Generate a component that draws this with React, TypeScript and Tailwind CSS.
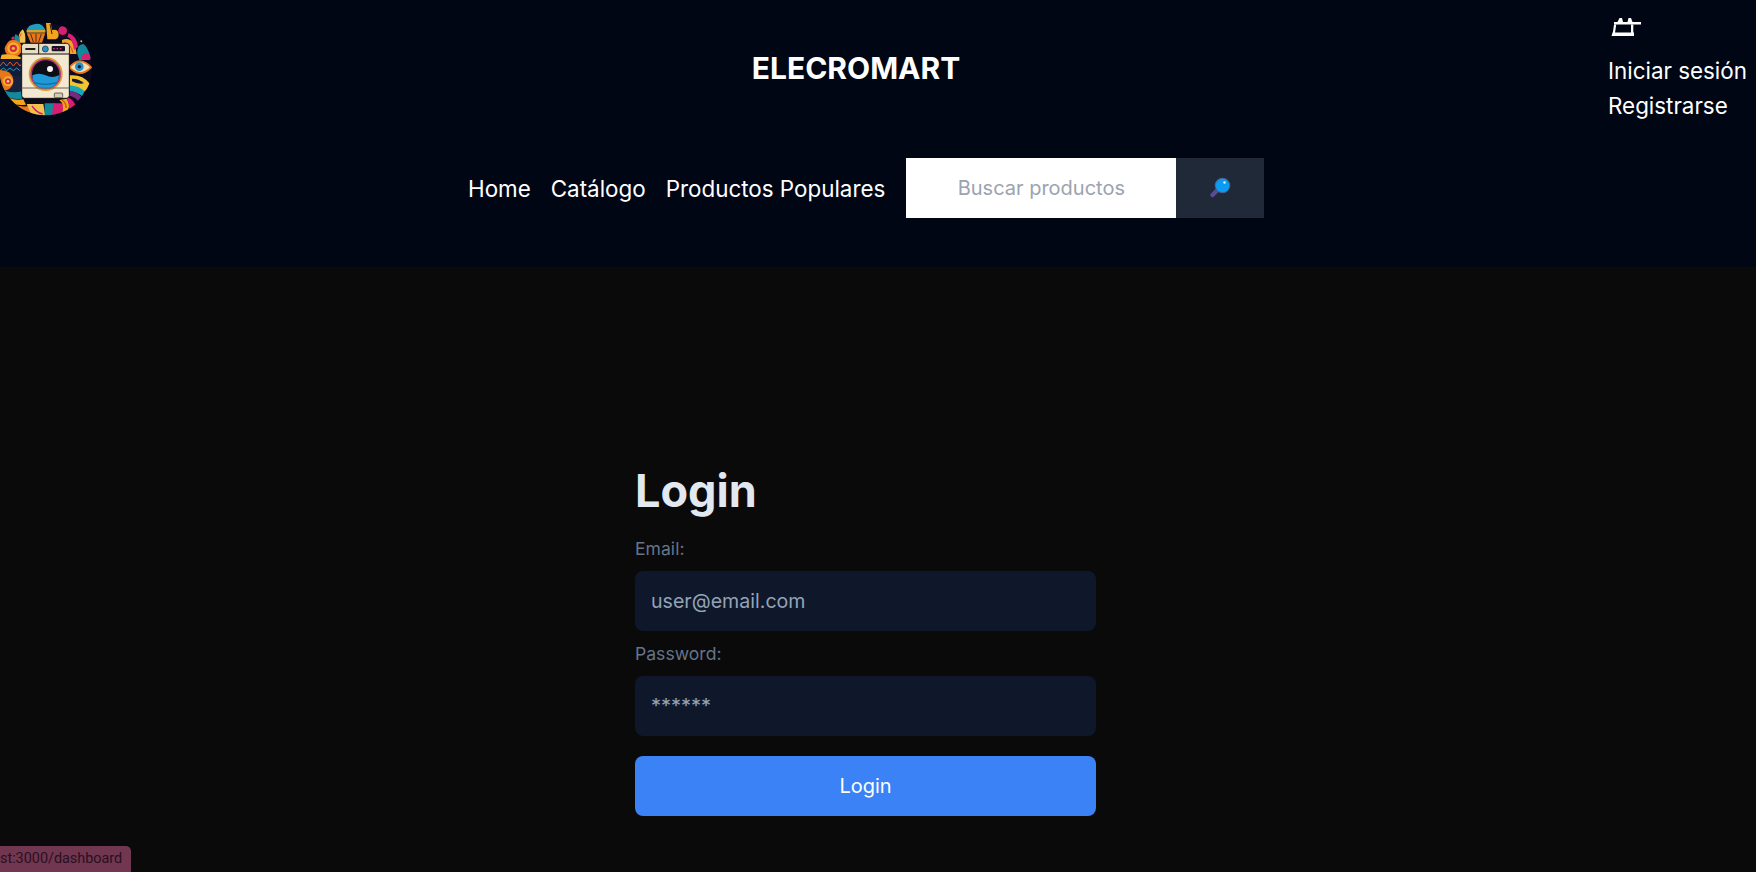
const Logo = () => (
  <svg width="96" height="120" viewBox="0 0 288 360" className="block blur-[0.4px]">
    <defs>
      <clipPath id="c"><circle cx="137" cy="207" r="139" /></clipPath>
    </defs>
    <g clipPath="url(#c)">
      <rect x="0" y="60" width="288" height="300" fill="#0c0a1e" />
      <path d="M80 96 a28 26 0 0 1 56 0z" fill="#1f9fc0" />
      <rect x="80" y="90" width="56" height="8" fill="#d9a02a" />
      <path d="M80 100 h56 l-10 28 h-34z" fill="#e8761b" />
      <path d="M92 102 l8 24 M108 102 v24 M124 102 l-8 24" stroke="#3a1d10" strokeWidth="2.5" />
      <path d="M138 68 h14 l4 22 q20-4 20 14 q0 14-16 14 h-18z" fill="#f2a51c" />
      <path d="M150 72 l6 30" stroke="#2a1a10" strokeWidth="3" />
      <circle cx="188" cy="92" r="13" fill="#d81e72" />
      <path d="M56 128 q-4-26 12-40 q10 10 8 40z" fill="#f2c14e" />
      <path d="M58 128 q-4-14 6-28" stroke="#e8551f" strokeWidth="3" fill="none" />
      <path d="M44 128 q-4-14 2-26 q12 4 14 26z" fill="#14899b" />
      <circle cx="38" cy="114" r="5" fill="#d81e72" />
      <circle cx="40" cy="145" r="26" fill="#e8761b" />
      <circle cx="40" cy="145" r="18" fill="#f4b02a" />
      <circle cx="40" cy="145" r="11" fill="#d6234a" />
      <circle cx="40" cy="145" r="5" fill="#f4b02a" />
      <path d="M0 165 q30-6 62 6 v6 h-62z" fill="#f4b02a" />
      <rect x="0" y="178" width="66" height="52" fill="#101c3c" />
      <path d="M0 198 l10-12 10 12 10-12 10 12 10-12 10 12 10-12" stroke="#e8551f" strokeWidth="3" fill="none" />
      <path d="M0 212 l10-8 10 8 10-8 10 8 10-8 10 8" stroke="#21a0b5" strokeWidth="3" fill="none" />
      <rect x="0" y="228" width="66" height="50" fill="#17213f" />
      <path d="M0 210 q36 0 40 30 q0 32-40 34z" fill="#e8761b" />
      <circle cx="24" cy="244" r="15" fill="#f4b02a" />
      <circle cx="24" cy="244" r="9" fill="#d6234a" />
      <circle cx="24" cy="244" r="4" fill="#f2d58a" />
      <path d="M14 272 q26 8 52 2 v22 q-28 4-44-6z" fill="#14899b" />
      <path d="M20 290 q20 12 50 8 l8 16 q-28 4-48-6z" fill="#f2a51c" />
      <path d="M38 312 q22 10 50 6 l16 26 q-36-4-58-20z" fill="#e8761b" />
      <path d="M80 312 h50 l6 36 q-26 4-44-10z" fill="#f2c14e" />
      <path d="M96 318 q14 20 32 24" stroke="#d81e72" strokeWidth="4" fill="none" />
      <path d="M134 310 h30 l-6 40 h-24z" fill="#12899b" />
      <path d="M160 310 h28 q6 16-6 36 h-26z" fill="#d81e72" />
      <path d="M178 300 q18 14 8 38 l18-8 q8-18-4-34z" fill="#f2a51c" />
      <path d="M186 300 q14 10 12 24" stroke="#c9501b" strokeWidth="4" fill="none" />
      <path d="M186 120 q36-14 44 42 h-22 q-2-26-22-28z" fill="#f0a52a" />
      <path d="M192 128 q22 2 26 30" stroke="#c9501b" strokeWidth="3" fill="none" />
      <path d="M206 100 q24 8 28 40 l-12 10 q-4-34-20-40z" fill="#d9236f" />
      <path d="M232 162 q-2-30 18-30 q18 12 24 38 l-6 10 h-30z" fill="#12899b" />
      <path d="M244 172 q8-18 24-10 l4 16 h-28z" fill="#d81e72" />
      <circle cx="244" cy="124" r="3" fill="#f2c14e" />
      <path d="M205 202 q34-42 72 0 q-38 40-72 0z" fill="#e8761b" />
      <path d="M212 202 q28-30 58 0 q-30 28-58 0z" fill="#efe0b8" />
      <circle cx="238" cy="200" r="13" fill="#2a8fc4" />
      <circle cx="238" cy="200" r="5" fill="#0d1b2e" />
      <path d="M208 226 q40-4 60 24 q-6 18-14 24 q-24-6-46-8z" fill="#f2c430" />
      <path d="M216 236 q24 0 36 14 q-18 4-36-6z" fill="#161a30" />
      <path d="M208 256 q30 2 46 18 l-8 14 q-18-14-38-14z" fill="#18a7b8" />
      <path d="M208 272 q22 2 36 18 l-10 12 q-14-14-26-14z" fill="#7a2a7e" />
      <path d="M204 292 q14 6 22 22 l-18 14 q0-18-8-32z" fill="#d81e72" />
      <rect x="65" y="130" width="143" height="165" rx="9" fill="#f3e9d2" stroke="#17130f" strokeWidth="3" />
      <rect x="67" y="132" width="139" height="30" rx="7" fill="#e7ddc4" />
      <path d="M65 162 h143 M116 132 v30" stroke="#17130f" strokeWidth="3" />
      <rect x="76" y="144" width="30" height="6" fill="#23201c" />
      <circle cx="136" cy="147" r="9" fill="#2a8fc4" stroke="#1a2a3a" strokeWidth="2" />
      <rect x="155" y="138" width="40" height="16" rx="3" fill="#1a1325" />
      <path d="M160 146 h4 M170 146 h4 M180 146 h4" stroke="#e0457a" strokeWidth="4" />
      <circle cx="137" cy="222" r="51" fill="#d9a02a" />
      <circle cx="137" cy="222" r="46" fill="#b7338a" />
      <circle cx="137" cy="222" r="41" fill="#0e0e16" />
      <path d="M97 226 q20-10 40 0 t40 0 a40 40 0 0 1 -80 0z" fill="#1f9ad6" />
      <path d="M104 248 q33 10 66 0" stroke="#0e5f8e" strokeWidth="3" fill="none" />
      <circle cx="150" cy="207" r="9" fill="#f4f4f4" />
      <path d="M65 264 h143" stroke="#6a6356" strokeWidth="3" />
      <rect x="163" y="279" width="25" height="14" rx="3" fill="#d7cdb4" stroke="#2b2b2b" strokeWidth="2" />
    </g>
  </svg>
);

const IronIcon = () => (
  <svg width="34" height="20" viewBox="0 0 34 20" fill="#ffffff" className="block">
    <path d="M9.5 5 L11.5 1 L14 1 L15 5 Z" />
    <path d="M19.5 5 L20.5 1 L23 1 L24.5 5 Z" />
    <rect x="6" y="5" width="27" height="2.5" />
    <path d="M6 7.5 L8.2 7.5 L7 16 L4.8 16 Z" />
    <path d="M23 7.5 L25.3 7.5 L25.3 16 L23 16 Z" />
    <path d="M4.5 15.5 H26 V19 H3.5 Z" />
  </svg>
);

const SearchEmoji = () => (
  <svg width="22" height="22" viewBox="0 0 22 22" className="block">
    <path d="M9 12.5 L3.5 18" stroke="#5b4a94" strokeWidth="4.5" strokeLinecap="round" />
    <circle cx="13.5" cy="8.5" r="7.8" fill="#4a5f8f" />
    <circle cx="13.5" cy="8.5" r="6.8" fill="#0b9bf0" />
    <circle cx="15.5" cy="5.5" r="1.2" fill="#e6f7ff" />
  </svg>
);

export default function App() {
  return (
    <div className="h-[872px] overflow-hidden bg-[#0a0a0a] font-['Inter',sans-serif] relative">
      <header className="h-[267px] bg-[#000614] text-white">
        <div className="flex justify-between items-start h-[134px]">
          <div className="w-[96px]"><Logo /></div>
          <h1 className="mt-[50px] ml-[8px] text-[30px] leading-[36px] font-bold">ELECROMART</h1>
          <div className="w-[148px] pt-[17px] text-[22.4px] leading-[35px]">
            <div className="h-[24px]"><IronIcon /></div>
            <div className="mt-[12px]">Iniciar sesión</div>
            <div>Registrarse</div>
          </div>
        </div>
        <nav className="flex items-center pl-[468px] pt-[24px] h-[60px] text-[22.4px] box-content">
          <a className="mr-[20px] pt-[2px]">Home</a>
          <a className="mr-[20px] pt-[2px]">Catálogo</a>
          <a className="mr-[21px] pt-[2px]">Productos Populares</a>
          <div className="flex h-[60px]">
            <div className="w-[270px] bg-white flex items-center justify-center text-[20px] text-[#9ca3af]">Buscar productos</div>
            <button className="w-[88px] bg-[#1f2937] flex items-center justify-center"><SearchEmoji /></button>
          </div>
        </nav>
      </header>
      <main className="ml-[635px] w-[461px] pt-[196px]">
        <h2 className="text-[45px] leading-[56px] font-bold text-[#e2e8f0]">Login</h2>
        <label className="block mt-[18px] text-[17.6px] leading-[24px] text-[#64748b]">Email:</label>
        <div className="mt-[10px] h-[60px] rounded-lg bg-[#0f172a] px-4 pt-[1px] flex items-center text-[19.6px] text-[#94a3b8]">user@email.com</div>
        <label className="block mt-[11px] text-[17.6px] leading-[24px] text-[#64748b]">Password:</label>
        <div className="mt-[10px] h-[60px] rounded-lg bg-[#0f172a] px-4 flex items-center text-[20px] text-[#94a3b8]">******</div>
        <button className="mt-[20px] w-full h-[60px] rounded-lg bg-[#3b82f6] text-white text-[20px]">Login</button>
      </main>
      <div className="absolute left-0 bottom-0 w-[131px] h-[26px] bg-[#713650] rounded-tr-[5px] overflow-hidden flex items-center text-[14.4px] font-['Roboto',sans-serif] whitespace-nowrap text-[#2a1020]">st:3000/dashboard</div>
    </div>
  );
}
